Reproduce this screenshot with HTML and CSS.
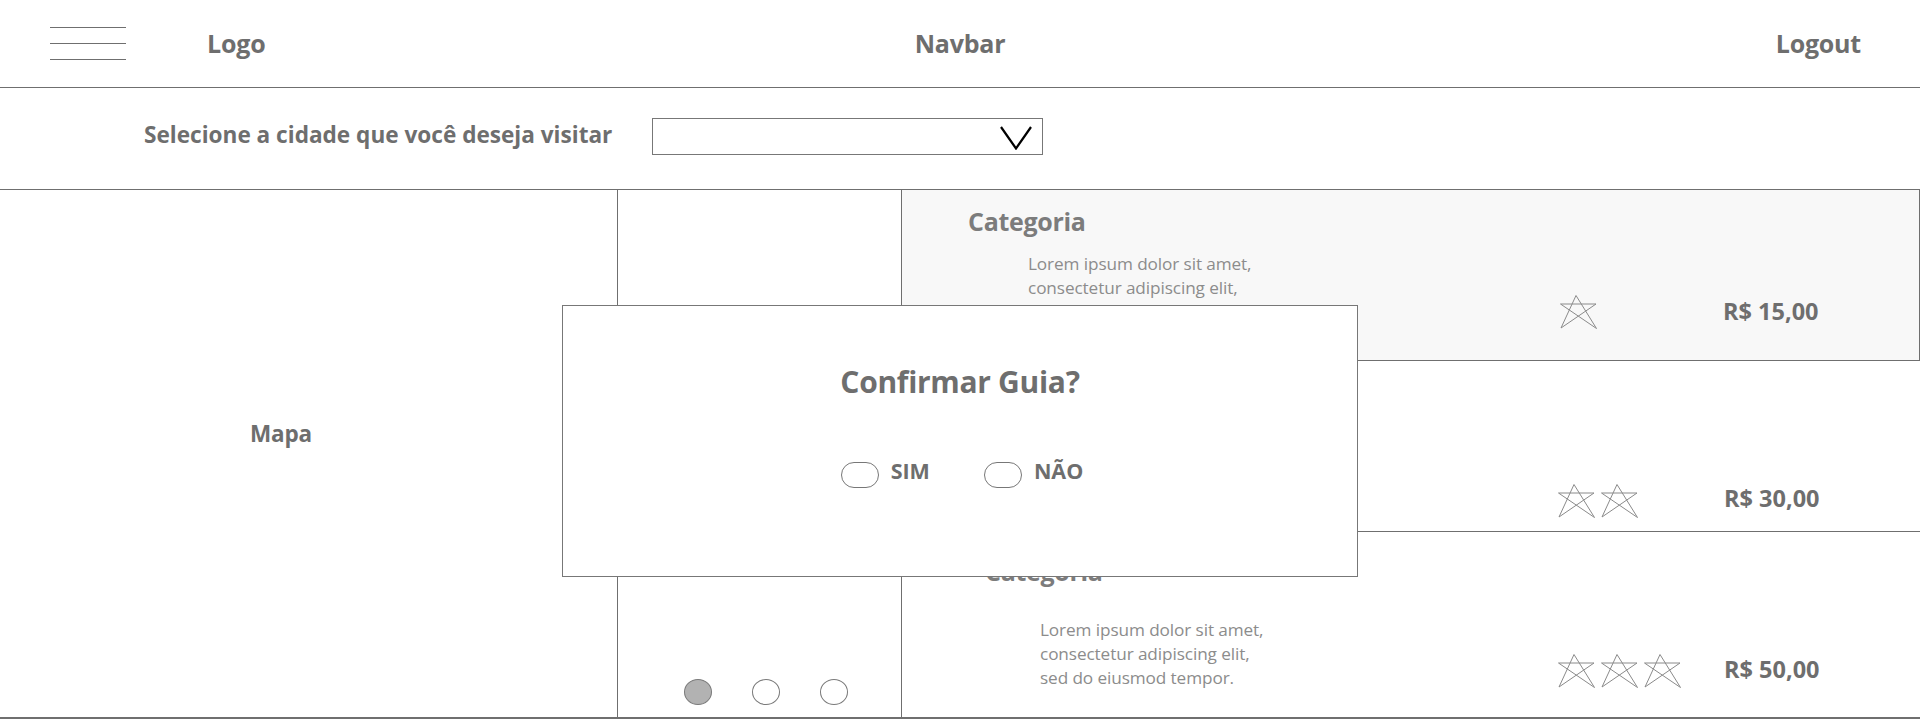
FILE: index.html
```html
<!DOCTYPE html>
<html lang="pt">
<head>
<meta charset="utf-8">
<title>Guia</title>
<link rel="stylesheet" href="styles.css">
</head>
<body>
<div class="page">
  <header class="topbar">
    <div class="topbar-left">
      <div class="burger"><span></span><span></span><span></span></div>
      <span class="nav-text logo">Logo</span>
    </div>
    <div class="nav-text navbar">Navbar</div>
    <div class="topbar-right"><span class="nav-text">Logout</span></div>
  </header>

  <section class="citybar">
    <label class="city-label">Selecione a cidade que você deseja visitar</label>
    <div class="select">
      <svg class="chevron" width="32" height="24" viewBox="0 0 32 24"><polyline points="1,1 16,22.5 31,1" fill="none" stroke="#000" stroke-width="2.2"/></svg>
    </div>
  </section>

  <main class="main">
    <div class="col-map"><span class="map-text">Mapa</span></div>
    <div class="col-mid">
      <div class="dots"><span class="dot active"></span><span class="dot"></span><span class="dot"></span></div>
    </div>
    <div class="col-list">
      <div class="item item-1">
        <div class="info">
          <div class="cat">Categoria</div>
          <p class="desc">Lorem ipsum dolor sit amet,<br>consectetur adipiscing elit,<br>sed do eiusmod tempor.</p>
        </div>
        <div class="stars">
          <svg class="star" viewBox="0 0 37 34"><polyline points="16,0.5 1,33 36,9 0.5,9 36.5,33.5 16,0.5" fill="none" stroke="#8a8a8a" stroke-width="1"/></svg>
        </div>
        <div class="price">R$ 15,00</div>
      </div>
      <div class="item item-2">
        <div class="info">
          <div class="cat">Categoria</div>
          <p class="desc">Lorem ipsum dolor sit amet,<br>consectetur adipiscing elit,<br>sed do eiusmod tempor.</p>
        </div>
        <div class="stars">
          <svg class="star" viewBox="0 0 37 34"><polyline points="16,0.5 1,33 36,9 0.5,9 36.5,33.5 16,0.5" fill="none" stroke="#8a8a8a" stroke-width="1"/></svg>
          <svg class="star" viewBox="0 0 37 34"><polyline points="16,0.5 1,33 36,9 0.5,9 36.5,33.5 16,0.5" fill="none" stroke="#8a8a8a" stroke-width="1"/></svg>
        </div>
        <div class="price">R$ 30,00</div>
      </div>
      <div class="item item-3">
        <div class="info">
          <div class="cat">Categoria</div>
          <p class="desc">Lorem ipsum dolor sit amet,<br>consectetur adipiscing elit,<br>sed do eiusmod tempor.</p>
        </div>
        <div class="stars">
          <svg class="star" viewBox="0 0 37 34"><polyline points="16,0.5 1,33 36,9 0.5,9 36.5,33.5 16,0.5" fill="none" stroke="#8a8a8a" stroke-width="1"/></svg>
          <svg class="star" viewBox="0 0 37 34"><polyline points="16,0.5 1,33 36,9 0.5,9 36.5,33.5 16,0.5" fill="none" stroke="#8a8a8a" stroke-width="1"/></svg>
          <svg class="star" viewBox="0 0 37 34"><polyline points="16,0.5 1,33 36,9 0.5,9 36.5,33.5 16,0.5" fill="none" stroke="#8a8a8a" stroke-width="1"/></svg>
        </div>
        <div class="price">R$ 50,00</div>
      </div>
    </div>

    <div class="modal">
      <h2 class="modal-title">Confirmar Guia?</h2>
      <div class="choices">
        <label class="choice"><span class="pill"></span><span class="choice-text">SIM</span></label>
        <label class="choice"><span class="pill"></span><span class="choice-text">NÃO</span></label>
      </div>
    </div>
  </main>
</div>
</body>
</html>
```

FILE: styles.css
```css
* { box-sizing: border-box; }
html, body {
  margin: 0;
  padding: 0;
  background: #fff;
}
body {
  font-family: "Open Sans", "Noto Sans", "Liberation Sans", sans-serif;
  color: #6e6e6e;
  width: 1920px;
  height: 720px;
  overflow: hidden;
}
.page { width: 1920px; }

/* top bar */
.topbar {
  height: 88px;
  border-bottom: 1px solid #6f6f6f;
  display: grid;
  grid-template-columns: 1fr auto 1fr;
  align-items: center;
}
.topbar-left {
  display: flex;
  align-items: center;
  padding-left: 50px;
}
.burger {
  width: 76px;
  display: flex;
  flex-direction: column;
  gap: 15px;
  margin-top: 0;
}
.burger span {
  display: block;
  height: 1px;
  background: #6f6f6f;
}
.nav-text {
  font-weight: 700;
  font-size: 25px;
  letter-spacing: -0.2px;
  color: #6e6e6e;
  line-height: 30px;
}
.navbar { margin-top: -2px; }
.topbar-left .logo { margin-left: 81px; margin-top: -2px; }
.topbar-right {
  display: flex;
  justify-content: flex-end;
  padding-right: 59px;
  margin-top: -2px;
}

/* city bar */
.citybar {
  height: 102px;
  border-bottom: 1px solid #6f6f6f;
  display: flex;
  align-items: center;
  padding-left: 144px;
  padding-bottom: 8px;
  gap: 40px;
}
.city-label {
  font-weight: 700;
  font-size: 22.6px;
  letter-spacing: 0;
  color: #6e6e6e;
  line-height: 30px;
}
.select {
  width: 391px;
  height: 37px;
  border: 1px solid #777;
  display: flex;
  align-items: center;
  justify-content: flex-end;
  padding-right: 10px;
  margin-top: 4px;
}
.chevron { display: block; margin-top: 2px; }

/* main */
.main {
  position: relative;
  height: 529px;
  border-bottom: 2px solid #6f6f6f;
  display: grid;
  grid-template-columns: 618px 284px 1fr;
}
.col-map {
  border-right: 1px solid #6f6f6f;
  padding: 229px 0 0 250px;
}
.map-text {
  font-weight: 700;
  font-size: 22.5px;
  letter-spacing: -0.2px;
  line-height: 30px;
}
.col-mid {
  border-right: 1px solid #6f6f6f;
  display: flex;
  align-items: flex-end;
  padding: 0 0 12px 66px;
}
.dots {
  display: flex;
  gap: 40px;
}
.dot {
  width: 28px;
  height: 26px;
  border: 1px solid #7a7a7a;
  border-radius: 50%;
  background: #fff;
}
.dot.active { background: #b2b2b2; }

.col-list {
  display: grid;
  grid-template-rows: 171px 171px 1fr;
}
.item {
  display: grid;
  grid-template-columns: 1fr 166px 196px;
  border-bottom: 1px solid #6f6f6f;
}
.item-1 {
  background: #f8f8f8;
  border-right: 1px solid #6f6f6f;
}
.item-3 { border-bottom: 0; }

.info { padding-left: 66px; padding-top: 15px; }
.item-3 .info { padding-left: 83px; padding-top: 23px; }
.cat {
  font-weight: 700;
  font-size: 25px;
  letter-spacing: -0.3px;
  line-height: 32px;
  color: #7c7c7c;
}
.desc {
  margin: 15px 0 0 60px;
  font-weight: 400;
  font-size: 17.2px;
  line-height: 24px;
  letter-spacing: -0.1px;
  color: #8c8c8c;
}
.item-3 .desc { margin-top: 31px; margin-left: 55px; }

.stars {
  display: flex;
  gap: 6px;
  align-self: end;
}
.star {
  width: 37px;
  height: 34px;
  display: block;
}
.price {
  align-self: end;
  font-weight: 700;
  font-size: 23.5px;
  letter-spacing: 0;
  line-height: 30px;
}
.item-1 .stars { margin-bottom: 31px; padding-left: 3px; }
.item-1 .price { margin-bottom: 34px; }
.item-2 .stars { margin-bottom: 13px; }
.item-2 .price { margin-bottom: 18px; }
.item-3 .stars { margin-bottom: 29px; }
.item-3 .price { margin-bottom: 33px; }

/* modal */
.modal {
  position: absolute;
  left: 562px;
  top: 115px;
  width: 796px;
  height: 272px;
  background: #fff;
  border: 1px solid #777;
  display: flex;
  flex-direction: column;
  align-items: center;
  padding-top: 56px;
}
.modal-title {
  margin: 0;
  font-size: 30px;
  font-weight: 700;
  letter-spacing: -0.3px;
  line-height: 40px;
  color: #6e6e6e;
}
.choices {
  display: flex;
  gap: 54px;
  margin-top: 60px;
  margin-left: 4px;
}
.choice {
  display: flex;
  align-items: center;
  gap: 12px;
}
.pill {
  width: 38px;
  height: 26px;
  border: 1px solid #777;
  border-radius: 13px;
  background: #fff;
}
.choice-text {
  font-weight: 700;
  font-size: 21.5px;
  line-height: 26px;
  color: #6e6e6e;
  margin-top: -9px;
}
```
